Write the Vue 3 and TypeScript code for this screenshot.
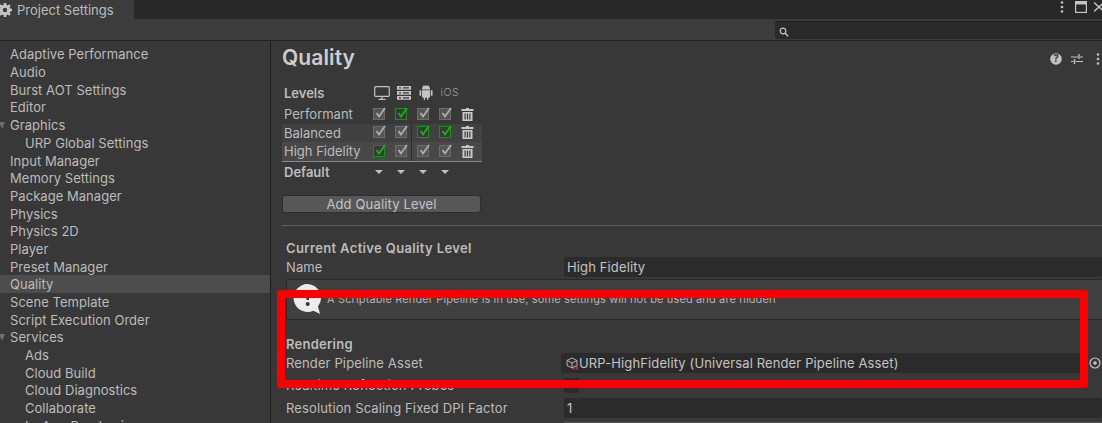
<script setup lang="ts">
interface Side { label: string; depth?: number; arrow?: boolean; active?: boolean }
const sidebar: Side[] = [
  { label: 'Adaptive Performance' }, { label: 'Audio' }, { label: 'Burst AOT Settings' }, { label: 'Editor' },
  { label: 'Graphics', arrow: true }, { label: 'URP Global Settings', depth: 1 }, { label: 'Input Manager' },
  { label: 'Memory Settings' }, { label: 'Package Manager' }, { label: 'Physics' }, { label: 'Physics 2D' },
  { label: 'Player' }, { label: 'Preset Manager' }, { label: 'Quality', active: true }, { label: 'Scene Template' },
  { label: 'Script Execution Order' }, { label: 'Services', arrow: true }, { label: 'Ads', depth: 1 },
  { label: 'Cloud Build', depth: 1 }, { label: 'Cloud Diagnostics', depth: 1 }, { label: 'Collaborate', depth: 1 },
  { label: 'In-App Purchasing', depth: 1 },
]
const levels = [
  { name: 'Performant', green: [1], shade: false },
  { name: 'Balanced', green: [2, 3], shade: true },
  { name: 'High Fidelity', green: [0], shade: true, strong: true },
]
const cols = [0, 1, 2, 3]
</script>

<template>
  <div class="window">
    <header class="titlebar">
      <div class="tab">
        <svg class="gear" viewBox="0 0 14 14" width="14" height="14">
          <path fill="#c4c4c4" fill-rule="evenodd" d="M5.8 0h2.4l.3 1.9 1.2.5L11.300 1.300l1.400 1.400-1.100 1.600.5 1.200 1.900.3v2.400l-1.900.3-.5 1.200 1.100 1.600-1.400 1.400-1.600-1.100-1.200.5-.3 1.900H5.800l-.3-1.900-1.200-.5-1.600 1.100-1.400-1.400 1.100-1.600-.5-1.200L0 8.200V5.800l1.900-.3.5-1.200-1.100-1.600 1.400-1.400 1.600 1.100 1.200-.5zM7 4.700a2.300 2.300 0 1 0 0 4.600 2.300 2.300 0 0 0 0-4.600z" />
        </svg>
        <span>Project Settings</span>
      </div>
      <div class="win-controls">
        <svg class="wc-dots" width="4" height="12" viewBox="0 0 4 12"><circle cx="2" cy="1.500" r="1.300" fill="#c4c4c4" /><circle cx="2" cy="6" r="1.300" fill="#c4c4c4" /><circle cx="2" cy="10.500" r="1.300" fill="#c4c4c4" /></svg>
        <svg class="wc-max" width="12" height="12" viewBox="0 0 12 12"><rect x=".6" y=".6" width="10.800" height="10.800" fill="none" stroke="#c4c4c4" stroke-width="1.200" /><rect x="1" y="1" width="10" height="2.500" fill="#c4c4c4" /></svg>
        <svg class="wc-close" width="8" height="12" viewBox="0 0 8 12"><path d="M0 1.500l10 9M10 1.500l-10 9" stroke="#c4c4c4" stroke-width="1.400" fill="none" /></svg>
      </div>
    </header>

    <div class="toolbar">
      <div class="search">
        <svg width="10" height="10" viewBox="0 0 10 10"><circle cx="4" cy="4" r="2.800" fill="none" stroke="#c8c8c8" stroke-width="1.200" /><path d="M6 6l3.200 3.200" stroke="#c8c8c8" stroke-width="1.400" /></svg>
      </div>
    </div>

    <div class="body">
      <nav class="sidebar">
        <div v-for="s in sidebar" :key="s.label" class="side-row" :class="{ active: s.active, child: s.depth }">
          <span v-if="s.arrow" class="arrow"></span>
          {{ s.label }}
        </div>
      </nav>

      <main class="content">
        <div class="heading">
          <h1>Quality</h1>
          <div class="head-icons">
            <svg width="12" height="12" viewBox="0 0 12 12"><circle cx="6" cy="6" r="5.800" fill="#c2c2c2" /><text x="6" y="9.300" text-anchor="middle" class="q">?</text></svg>
            <svg class="hi-sliders" width="12" height="12" viewBox="0 0 12 12"><path d="M0 4h7M9 4h3M0 8.500h2.500M4.500 8.500h7.500" stroke="#c2c2c2" stroke-width="1.100" /><path d="M8 1v5M3.500 6v5" stroke="#c2c2c2" stroke-width="1.300" /></svg>
            <svg class="hi-dots" width="4" height="12" viewBox="0 0 4 12"><circle cx="2" cy="1.500" r="1.300" fill="#c2c2c2" /><circle cx="2" cy="6" r="1.300" fill="#c2c2c2" /><circle cx="2" cy="10.500" r="1.300" fill="#c2c2c2" /></svg>
          </div>
        </div>

        <section class="levels">
          <div class="lv-head">
            <strong>Levels</strong>
            <div class="platforms">
              <svg class="p1" width="16" height="14" viewBox="0 0 16 14"><rect x=".7" y=".7" width="14.600" height="9.600" rx="1" fill="none" stroke="#c4c4c4" stroke-width="1.200" /><path d="M8 10.500v2.500M4.500 13.300h7" stroke="#c4c4c4" stroke-width="1.200" /></svg>
              <svg class="p2" width="14" height="14" viewBox="0 0 14 14"><path fill="#c4c4c4" d="M0 0h14v3.800H0zM0 5h14v3.800H0zM0 10h14v3.800H0z" /><path fill="#383838" d="M2 1.300h2v1.200H2zM6 1.300h6v1.200H6zM2 6.300h2v1.200H2zM6 6.300h6v1.200H6zM2 11.300h2v1.200H2zM6 11.300h6v1.200H6z" /></svg>
              <svg class="p3" width="14" height="15" viewBox="0 0 14 15"><path fill="#c4c4c4" d="M3 4.500a4 4 0 0 1 8 0zM3 5.300h8v6.500a1 1 0 0 1-1 1H9.200V15H8v-2.200H6V15H4.800v-2.200H4a1 1 0 0 1-1-1zM.5 5.300h1.700v5.500H.5zM11.800 5.300h1.700v5.500h-1.700zM4.200 .3l1 1.500-.4.300-1-1.500zM9.800 .3l.4.300-1 1.500-.4-.3z" /></svg>
              <span class="ios">iOS</span>
            </div>
          </div>

          <div v-for="lv in levels" :key="lv.name" class="lv-row" :class="{ shade: lv.shade, strong: lv.strong }">
            <span class="lv-name">{{ lv.name }}</span>
            <span v-for="c in cols" :key="c" class="cell" :class="{ split: lv.shade && c === 2 }">
              <span class="check" :class="{ green: lv.green.includes(c) }">
                <svg width="13" height="13" viewBox="0 0 13 13"><path d="M2.500 6l2.500 3.500L11 1" fill="none" stroke-width="1.800" /></svg>
              </span>
            </span>
            <span class="cell">
              <svg width="13" height="13" viewBox="0 0 13 13"><path fill="#c8c8c8" d="M5 0h3v1h4.500v2H.5V1H5zM1.500 4h10v9h-10z" /><path fill="#383838" d="M3.500 5.500h1.200v6H3.500zM5.900 5.500h1.200v6H5.900zM8.300 5.500h1.200v6H8.300z" /></svg>
            </span>
          </div>

          <div class="lv-default">
            <strong class="lv-name">Default</strong>
            <span v-for="c in cols" :key="c" class="cell"><span class="caret"></span></span>
          </div>

          <button class="add-btn" type="button">Add Quality Level</button>
        </section>

        <hr class="sep" />

        <section class="current">
          <strong class="sect first">Current Active Quality Level</strong>
          <div class="prop name-prop">
            <label>Name</label>
            <div class="field">High Fidelity</div>
          </div>

          <div class="help">
            <svg width="30" height="32" viewBox="0 0 30 32"><path fill="#ececec" d="M14.500 1a14 14 0 1 0 6 26.700L27 31l-2-7.500A14 14 0 0 0 14.500 1z" /><path fill="#383838" d="M13 7h3.500l-.5 10h-2.500zM14.700 19a2 2 0 1 1 0 4 2 2 0 0 1 0-4z" /></svg>
            <span>A Scriptable Render Pipeline is in use, some settings will not be used and are hidden</span>
          </div>

          <strong class="sect rendering">Rendering</strong>
          <div class="prop asset-prop">
            <label>Render Pipeline Asset</label>
            <div class="field asset">
              <svg width="13" height="13" viewBox="0 0 13 13"><path d="M6 1l5 2.500v5L6 11 1 8.500v-5zM1 3.500L6 6l5-2.500M6 6v5" fill="none" stroke="#b4b4b4" stroke-width="1" /><path d="M8 8.500v4M11 8.500v4" stroke="#d8502a" stroke-width="1.200" fill="none" /></svg>
              <span>URP-HighFidelity (Universal Render Pipeline Asset)</span>
            </div>
            <svg class="target" width="12" height="12" viewBox="0 0 12 12"><circle cx="6" cy="6" r="5" fill="none" stroke="#c4c4c4" stroke-width="1.200" /><circle cx="6" cy="6" r="1.800" fill="#c4c4c4" /></svg>
          </div>
          <div class="prop probe-prop">
            <label>Realtime Reflection Probes</label>
            <div class="mini-check"></div>
          </div>
          <div class="prop dpi-prop">
            <label>Resolution Scaling Fixed DPI Factor</label>
            <div class="field">1</div>
          </div>
          <div class="next-row"></div>
        </section>
      </main>
    </div>

    <div class="red-box"></div>
  </div>
</template>

<style>
html, body { margin: 0; background: #383838; overflow: hidden; }
</style>

<style scoped>
.window {
  position: relative;
  width: 1102px;
  height: 423px;
  overflow: hidden;
  background: #383838;
  color: #bcbcbc;
  font-family: Inter, "Liberation Sans", sans-serif;
  font-size: 13px;
}
.titlebar { height: 19px; background: #282828; display: flex; justify-content: space-between; }
.tab { width: 134px; background: #3c3c3c; display: flex; align-items: center; gap: 5px; color: #bcbcbc; }
.gear { margin-left: -2px; flex: none; }
.win-controls { display: flex; align-items: flex-start; padding-top: 1px; width: 42px; box-sizing: border-box; }
.wc-max { margin-left: 11px; flex: none; }
.wc-close { margin-left: 7px; flex: none; }
.toolbar { height: 22px; background: #3c3c3c; border-bottom: 1px solid #232323; box-sizing: border-box; display: flex; justify-content: flex-end; padding-top: 2px; }
.search { width: 327px; height: 18px; background: #2a2a2a; border-radius: 3px 0 0 3px; box-sizing: border-box; padding: 5px 0 0 4px; border-top: 1px solid #1e1e1e; display: flex; align-items: flex-start; }
.body { display: flex; height: 382px; }
.sidebar { width: 270px; flex: none; border-right: 1px solid #1f1f1f; padding-top: 4.4px; letter-spacing: .04px; }
.side-row { position: relative; height: 17.7px; line-height: 18px; padding-left: 10px; white-space: nowrap; }
.side-row.child { padding-left: 25px; }
.side-row.active { background: #4d4d4d; }
.arrow { position: absolute; left: -1px; top: 6px; border-style: solid; border-width: 7px 3px 0 3px; border-color: #6e6e6e transparent transparent; }
.content { flex: 1; min-width: 0; padding-left: 11px; }
.heading { height: 33px; display: flex; justify-content: space-between; align-items: center; }
h1 { margin: 0; font-size: 21px; font-weight: 600; color: #cdcdcd; line-height: 30px; letter-spacing: .1px; }
.head-icons { display: flex; align-items: center; margin-right: 2px; margin-top: 2px; }
.head-icons svg { flex: none; }
.hi-sliders { margin-left: 9px; }
.hi-dots { margin-left: 13px; }
.q { font-size: 10px; font-weight: 700; fill: #383838; }
.levels { width: 200px; padding-top: 10px; }
.lv-head { display: flex; height: 21px; align-items: flex-start; padding-left: 2px; line-height: 19px; }
strong { font-weight: 600; }
.platforms { margin-left: 50px; display: flex; align-items: center; margin-top: -1px; }
.platforms > svg { flex: none; }
.p2 { margin-left: 7px; }
.p3 { margin-left: 8px; }
.ios { font-size: 10.5px; color: #9e9e9e; font-weight: 300; margin-left: 7px; letter-spacing: .6px; }
.lv-row, .lv-default { display: grid; grid-template-columns: 86px repeat(5, 22px); height: 18.5px; align-items: center; }
.lv-row.shade { background: #414141; }
.lv-row.strong { background: #484848; border-bottom: 1px solid #8a8a8a; }
.lv-name { padding-left: 2px; white-space: nowrap; }
.cell { display: flex; justify-content: center; align-items: center; height: 100%; }
.cell.split { border-left: 1px solid #2c2c2c; margin-left: -1px; }
.check { width: 10px; height: 10px; background: #555; border: 1px solid #6c6c6c; display: block; position: relative; margin-top: -1px; }
.check svg { position: absolute; left: 0; top: -2px; stroke: #adadad; }
.check.green { background: #333d33; border-color: #1a8f1a; }
.check.green svg { stroke: #1cae1c; }
.lv-default { margin-top: 2px; height: 16px; }
.caret { border-style: solid; border-width: 4px 4px 0 4px; border-color: #c0c0c0 transparent transparent; }
.add-btn { display: block; width: 199px; height: 18px; margin: 15px 0 0; background: #575757; border: 1px solid #2e2e2e; border-radius: 3px; color: #c4c4c4; font: inherit; padding: 0; line-height: 16px; letter-spacing: .15px; }
.sep { border: 0; border-top: 1px solid #5e5e5e; margin: 12px 0 0; }
.current { padding-left: 4px; letter-spacing: .13px; }
.sect { display: block; color: #bcbcbc; line-height: 16px; }
.first { padding-top: 14px; letter-spacing: .36px; }
.prop { display: flex; align-items: center; }
.prop label { width: 278px; flex: none; white-space: nowrap; }
.field { flex: 1; min-width: 0; background: #2b2b2b; border-radius: 3px; padding-left: 3px; line-height: 21px; height: 20px; color: #c4c4c4; box-sizing: border-box; }
.name-prop { height: 20px; margin-top: 1px; }
.help { display: flex; align-items: center; gap: 4px; height: 41px; background: #404040; border: 1px solid #2b2b2b; border-right: 0; border-radius: 3px 0 0 3px; margin-top: 2px; box-sizing: border-box; padding-left: 6px; font-size: 11px; color: #b0b0b0; white-space: nowrap; }
.help svg { flex: none; }
.rendering { margin-top: 16px; letter-spacing: .25px; }
.asset-prop { height: 21px; margin-top: 1px; }
.asset-prop label { width: 275px; }
.field.asset { flex: none; width: 525px; display: flex; align-items: center; padding-left: 5px; }
.target { margin-left: 3px; flex: none; }
.probe-prop { height: 23px; }
.mini-check { width: 15px; height: 15px; background: #2b2b2b; border-radius: 2px; }
.dpi-prop { height: 21px; margin-top: 1px; }
.next-row { height: 10px; margin: 3px 0 0 278px; background: #555; }
.red-box { position: absolute; left: 277px; top: 290px; width: 811px; height: 98px; box-sizing: border-box; border: 8px solid #fb0000; border-radius: 3px; pointer-events: none; }
</style>
